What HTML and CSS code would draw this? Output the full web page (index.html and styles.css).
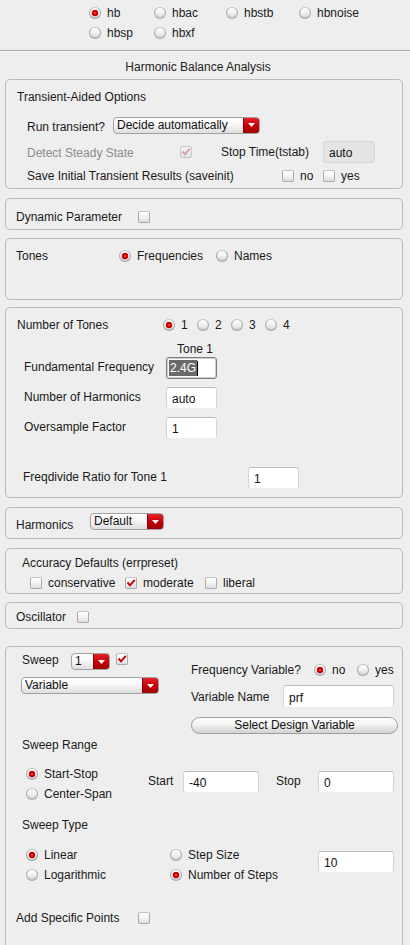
FILE: index.html
```html
<!DOCTYPE html>
<html>
<head>
<meta charset="utf-8">
<link rel="stylesheet" href="styles.css">
</head>
<body>
<div class="modes">
  <span class="opt"><span class="radio on"></span>hb</span>
  <span class="opt"><span class="radio"></span>hbac</span>
  <span class="opt"><span class="radio"></span>hbstb</span>
  <span class="opt"><span class="radio"></span>hbnoise</span>
  <span class="opt"><span class="radio"></span>hbsp</span>
  <span class="opt"><span class="radio"></span>hbxf</span>
</div>
<div class="sep"></div>
<div class="title">Harmonic Balance Analysis</div>

<section class="panel p-trans">
  <div class="row t-head">Transient-Aided Options</div>
  <div class="row t-run">
    <span class="lbl-run">Run transient?</span>
    <span class="combo c-decide"><span class="combo-text">Decide automatically</span><span class="combo-btn"><svg width="7" height="4" viewBox="0 0 7 4"><path d="M0 0H7L3.5 4Z" fill="#fff"/></svg></span></span>
  </div>
  <div class="row t-detect">
    <span class="lbl-detect disabled">Detect Steady State</span>
    <span class="cb cb-dis"><svg width="12" height="12" viewBox="0 0 12 12"><path d="M2.5 5.5L5 8.3L9.8 2.8" stroke="#dba0a4" stroke-width="2" fill="none"/></svg></span>
    <span class="lbl-stop">Stop Time(tstab)</span>
    <span class="field field-dis w52">auto</span>
  </div>
  <div class="row t-save">
    <span class="lbl-save">Save Initial Transient Results (saveinit)</span>
    <span class="cb"></span><span class="cb-text w23">no</span>
    <span class="cb"></span><span class="cb-text">yes</span>
  </div>
</section>

<section class="panel p-dyn">
  <div class="row h16">
    <span class="lbl-dyn">Dynamic Parameter</span>
    <span class="cb"></span>
  </div>
</section>

<section class="panel p-tones">
  <div class="row h16">
    <span class="lbl-tones">Tones</span>
    <span class="opt w97"><span class="radio on"></span>Frequencies</span>
    <span class="opt"><span class="radio"></span>Names</span>
  </div>
</section>

<section class="panel p-num">
  <div class="row h16 num-head">
    <span class="lbl-num">Number of Tones</span>
    <span class="opt w34"><span class="radio on"></span>1</span>
    <span class="opt w34"><span class="radio"></span>2</span>
    <span class="opt w34"><span class="radio"></span>3</span>
    <span class="opt"><span class="radio"></span>4</span>
  </div>
  <div class="tone-hdr">Tone 1</div>
  <div class="frow f1">
    <span class="flbl">Fundamental Frequency</span>
    <span class="field field-focus w51"><span class="sel">2.4G</span><span class="caret"></span></span>
  </div>
  <div class="frow f2">
    <span class="flbl">Number of Harmonics</span>
    <span class="field w51">auto</span>
  </div>
  <div class="frow f2">
    <span class="flbl">Oversample Factor</span>
    <span class="field w51">1</span>
  </div>
  <div class="frow f4">
    <span class="flbl-div">Freqdivide Ratio for Tone 1</span>
    <span class="field w51">1</span>
  </div>
</section>

<section class="panel p-harm">
  <div class="row harm-row">
    <span class="lbl-harm">Harmonics</span>
    <span class="combo c-default"><span class="combo-text">Default</span><span class="combo-btn"><svg width="7" height="4" viewBox="0 0 7 4"><path d="M0 0H7L3.5 4Z" fill="#fff"/></svg></span></span>
  </div>
</section>

<section class="panel p-acc">
  <div class="row acc-head">Accuracy Defaults (errpreset)</div>
  <div class="row acc-row">
    <span class="cbopt w95"><span class="cb"></span>conservative</span>
    <span class="cbopt w80"><span class="cb"><svg width="12" height="12" viewBox="0 0 12 12"><path d="M2.5 5.5L5 8.3L9.8 2.8" stroke="#c8000a" stroke-width="2" fill="none"/></svg></span>moderate</span>
    <span class="cbopt"><span class="cb"></span>liberal</span>
  </div>
</section>

<section class="panel p-osc">
  <div class="row h14">
    <span class="lbl-osc">Oscillator</span>
    <span class="cb"></span>
  </div>
</section>

<section class="panel p-sweep">
  <div class="sweep-top">
    <div class="sw-left">
      <div class="sw-row1">
        <span class="lbl-sweep">Sweep</span>
        <span class="combo c-one"><span class="combo-text">1</span><span class="combo-btn"><svg width="7" height="4" viewBox="0 0 7 4"><path d="M0 0H7L3.5 4Z" fill="#fff"/></svg></span></span>
        <span class="cb cb-sweep"><svg width="12" height="12" viewBox="0 0 12 12"><path d="M2.5 5.5L5 8.3L9.8 2.8" stroke="#c8000a" stroke-width="2" fill="none"/></svg></span>
      </div>
      <span class="combo c-var"><span class="combo-text">Variable</span><span class="combo-btn"><svg width="7" height="4" viewBox="0 0 7 4"><path d="M0 0H7L3.5 4Z" fill="#fff"/></svg></span></span>
    </div>
    <div class="sw-right">
      <div class="row h16">
        <span class="lbl-freqvar">Frequency Variable?</span>
        <span class="opt w43"><span class="radio on"></span>no</span>
        <span class="opt"><span class="radio"></span>yes</span>
      </div>
      <div class="row varname">
        <span class="lbl-varname">Variable Name</span>
        <span class="field w111 h23">prf</span>
      </div>
      <div class="pill">Select Design Variable</div>
    </div>
  </div>

  <div class="sec-lbl range-lbl">Sweep Range</div>
  <div class="range">
    <div class="rgroup w122">
      <span class="opt ropt"><span class="radio on"></span>Start-Stop</span>
      <span class="opt ropt"><span class="radio"></span>Center-Span</span>
    </div>
    <div class="range-fields">
      <span class="lbl-start">Start</span>
      <span class="field w76">-40</span>
      <span class="lbl-stopf">Stop</span>
      <span class="field w76">0</span>
    </div>
  </div>

  <div class="sec-lbl type-lbl">Sweep Type</div>
  <div class="range">
    <div class="rgroup w144">
      <span class="opt ropt"><span class="radio on"></span>Linear</span>
      <span class="opt ropt"><span class="radio"></span>Logarithmic</span>
    </div>
    <div class="rgroup w148">
      <span class="opt ropt"><span class="radio"></span>Step Size</span>
      <span class="opt ropt"><span class="radio on"></span>Number of Steps</span>
    </div>
    <span class="field w76 steps">10</span>
  </div>

  <div class="row h14 add-row">
    <span class="lbl-dyn">Add Specific Points</span>
    <span class="cb"></span>
  </div>
</section>
</body>
</html>
```

FILE: styles.css
```css
* { box-sizing: border-box; }

html, body {
  margin: 0;
  background: #eeeeee;
}

body {
  width: 410px;
  height: 945px;
  overflow: hidden;
  font-family: "Liberation Sans", Arial, sans-serif;
  font-size: 12px;
  line-height: 14px;
  color: #1a1a1a;
}

/* ---------- generic controls ---------- */
.row { display: flex; align-items: center; white-space: nowrap; }
.h14 { height: 14px; }
.h16 { height: 16px; }

.opt { display: flex; align-items: center; white-space: nowrap; }
.cbopt { display: flex; align-items: center; white-space: nowrap; }

.radio {
  flex: none;
  width: 12px;
  height: 12px;
  margin-right: 6px;
  border-radius: 50%;
  border: 1px solid #a8a8a8;
  border-top-color: #c2c2c2;
  background: linear-gradient(#ffffff, #f2f2f2 45%, #d6d6d6);
  box-shadow: inset 0 -1px 1px rgba(0,0,0,0.08);
}
.radio.on {
  background:
    radial-gradient(circle at 50% 50%, #ff8080 0, #d60000 1.3px, #c40000 3px, rgba(196,0,0,0) 3.6px),
    linear-gradient(#ffffff, #f2f2f2 45%, #d6d6d6);
}

.cb {
  flex: none;
  width: 12px;
  height: 12px;
  border: 1px solid #ababab;
  border-top-color: #c4c4c4;
  border-radius: 2px;
  background: linear-gradient(#ffffff, #f4f4f4 50%, #dcdcdc);
  display: flex;
  align-items: center;
  justify-content: center;
  overflow: visible;
}
.cb svg { display: block; flex: none; margin-top: -1px; }
.cbopt .cb { margin-right: 6px; }
.cb-dis { background: linear-gradient(#f4f4f4, #e4e4e4); border-color: #c8c8c8; }

.combo {
  display: flex;
  height: 17px;
  border: 1px solid #a2a2a2;
  border-radius: 4px;
  background: linear-gradient(#ffffff, #f6f6f6 45%, #dedede);
  overflow: hidden;
}
.combo-text {
  flex: 1;
  padding: 0 0 0 3px;
  line-height: 14px;
  color: #111;
}
.combo-btn {
  flex: none;
  width: 17px;
  margin: -1px -1px -1px 0;
  border-radius: 0 4px 4px 0;
  background: linear-gradient(#e4242a, #c80008 50%, #a00006);
  border: 1px solid #8c0006;
  display: flex;
  align-items: center;
  justify-content: center;
}
.combo-btn svg { display: block; }

.field {
  flex: none;
  height: 22px;
  background: #ffffff;
  border: 1px solid #d4d4d4;
  border-top-color: #bcbcbc;
  border-bottom-color: #ededed;
  border-radius: 3px;
  padding: 2px 0 0 5px;
  display: flex;
  align-items: center;
  color: #111;
}
.h23 { height: 23px; }
.field-dis {
  background: #e4e4e4;
  border-color: #d6d6d6;
}
.field-focus {
  border: 1px solid #7c7c7c;
  box-shadow: inset 0 0 0 1px #cfcfcf;
  padding: 0 0 0 2px;
}
.sel {
  background: #6a6a6a;
  color: #ffffff;
  padding: 1px 1px 0 1px;
  line-height: 15px;
}
.caret {
  width: 1px;
  height: 15px;
  background: #000;
}

.pill {
  width: 207px;
  height: 17px;
  margin-top: 9px;
  border: 1px solid #9e9e9e;
  border-radius: 9px;
  background: linear-gradient(#ffffff, #f2f2f2 45%, #d2d2d2);
  text-align: center;
  line-height: 15px;
  color: #111;
}

.disabled { color: #8c8c8c; }

.w23 { width: 23px; }
.w34 { width: 34px; }
.w43 { width: 43px; }
.w51 { width: 51px; }
.w52 { width: 52px; }
.w76 { width: 76px; }
.w80 { width: 80px; }
.w95 { width: 95px; }
.w97 { width: 97px; }
.w111 { width: 111px; }
.w122 { width: 122px; }
.w144 { width: 144px; }
.w148 { width: 148px; }

/* ---------- header ---------- */
.modes {
  display: grid;
  grid-template-columns: 65px 72px 73px auto;
  grid-auto-rows: 16px;
  row-gap: 4px;
  padding: 5px 0 0 89px;
}
.sep {
  height: 1px;
  margin-top: 9px;
  background: #a9a9a9;
  box-shadow: 0 1px 0 #fafafa;
}
.title {
  margin-top: 9px;
  height: 14px;
  text-align: center;
  padding-right: 14px;
  color: #222;
}

/* ---------- panels ---------- */
.panel {
  margin: 0 7px 0 5px;
  border: 1px solid #bababa;
  border-radius: 5px;
}
.p-trans { margin-top: 5px; height: 110px; padding-top: 7px; }
.p-dyn { margin-top: 9px; height: 32px; padding-top: 10px; }
.p-tones { margin-top: 8px; height: 62px; padding-top: 9px; }
.p-num { margin-top: 7px; height: 191px; padding-top: 9px; }
.p-harm { margin-top: 9px; height: 32px; padding-top: 5px; }
.p-acc { margin-top: 9px; height: 46px; padding-top: 7px; }
.p-osc { margin-top: 8px; height: 27px; padding-top: 7px; }
.p-sweep { margin-top: 17px; height: 330px; padding-top: 6px; }

/* transient panel */
.t-head { height: 20px; padding-left: 11px; }
.t-run { height: 20px; margin-top: 8px; padding-left: 21px; }
.lbl-run { width: 86px; padding-top: 4px; }
.c-decide { width: 147px; }
.t-detect { height: 22px; margin-top: 6px; padding-left: 21px; }
.lbl-detect { width: 153px; padding-top: 2px; }
.lbl-stop { margin-left: 29px; width: 102px; }
.t-save { height: 20px; margin-top: 3px; padding-left: 21px; }
.lbl-save { width: 255px; }
.cb-text { margin-left: 6px; }

/* dynamic / tones / osc */
.lbl-dyn { width: 122px; margin-left: 10px; }
.lbl-tones { width: 103px; margin-left: 10px; }
.lbl-osc { width: 61px; margin-left: 10px; }

/* number of tones panel */
.num-head { padding-left: 11px; }
.lbl-num { width: 146px; }
.tone-hdr { margin: 9px 0 0 171px; height: 14px; }
.frow { display: flex; align-items: center; height: 22px; white-space: nowrap; }
.f1 { margin-top: 1px; }
.f2 { margin-top: 8px; }
.f4 { margin-top: 28px; }
.flbl { width: 142px; margin-left: 18px; margin-top: -2px; }
.flbl-div { width: 225px; margin-left: 17px; margin-top: -2px; }

/* harmonics */
.harm-row { align-items: flex-start; }
.lbl-harm { width: 74px; margin-left: 10px; margin-top: 5px; }
.c-default { width: 74px; }

/* accuracy */
.acc-head { height: 14px; padding-left: 16px; }
.acc-row { height: 14px; margin-top: 6px; padding-left: 24px; }

/* sweep */
.sweep-top { display: flex; align-items: flex-start; }
.sw-left { width: 170px; margin-left: 15px; display: flex; flex-direction: column; align-items: flex-start; }
.sw-row1 { display: flex; align-items: flex-start; height: 17px; }
.lbl-sweep { width: 49px; margin-left: 1px; padding-top: 0; }
.c-one { width: 39px; }
.cb-sweep { margin-left: 6px; }
.c-var { width: 138px; margin-top: 7px; }
.sw-right { width: 207px; margin-top: 9px; }
.lbl-freqvar { width: 123px; }
.varname { margin-top: 7px; height: 23px; }
.lbl-varname { width: 92px; }

.sec-lbl { height: 14px; margin-left: 16px; }
.range-lbl { margin-top: 4px; }
.type-lbl { margin-top: 14px; }
.range { display: flex; align-items: flex-start; margin-top: 12px; margin-left: 20px; }
.type-lbl + .range { margin-top: 13px; }
.rgroup { display: flex; flex-direction: column; }
.ropt { height: 20px; }
.range-fields { display: flex; align-items: center; margin-top: 7px; height: 22px; }
.lbl-start { width: 35px; margin-top: -3px; }
.lbl-stopf { width: 42px; margin-left: 17px; margin-top: -3px; }
.steps { margin-top: 6px; }
.add-row { margin-top: 26px; }
```
